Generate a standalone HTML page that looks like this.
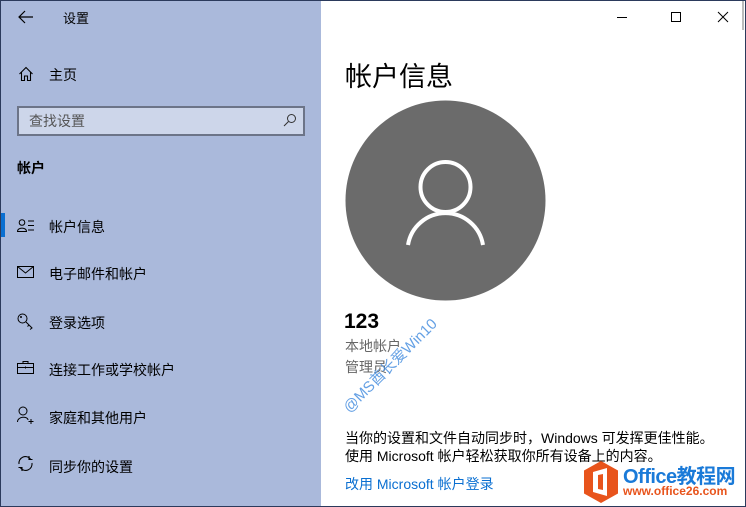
<!DOCTYPE html>
<html><head><meta charset="utf-8"><style>
*{margin:0;padding:0;box-sizing:border-box}
body{width:746px;height:507px;overflow:hidden;font-family:"Liberation Sans","Noto Sans CJK SC",sans-serif;background:#fff;position:relative}
.side{position:absolute;left:0;top:0;width:321px;height:507px;background:#aab9db}
.frame{position:absolute;left:0;top:0;width:746px;height:507px;border:1px solid #2b3a5c;pointer-events:none}
.t{position:absolute;font-size:14px;color:#000;white-space:nowrap}
.ic{position:absolute}
.search{position:absolute;left:17px;top:106px;width:288px;height:30px;border:2px solid #6c7488;background:#cdd6ea}
</style></head><body>
<div class="side"></div>
<svg class="ic" style="left:18px;top:10px" width="16" height="14"><path d="M7 1L1 7L7 13M1 7H15" stroke="#000" fill="none" stroke-width="1.2"/></svg>
<div class="t" style="left:63px;top:8px;font-size:13px">设置</div>
<svg class="ic" style="left:18px;top:66px" width="16" height="16"><path d="M1.5 8L8 1.5L14.5 8M3.5 6V14.5H6.5V10H9.5V14.5H12.5V6" stroke="#000" fill="none" stroke-width="1.1"/></svg>
<div class="t" style="left:49px;top:65px">主页</div>
<div class="search"></div>
<div class="t" style="left:29px;top:111px;color:#555">查找设置</div>
<svg class="ic" style="left:283px;top:113px" width="14" height="14"><circle cx="8.5" cy="5.5" r="4" stroke="#333" fill="none" stroke-width="1"/><path d="M5.5 8.5L1 13" stroke="#333" stroke-width="1.1"/></svg>
<div class="t" style="left:17px;top:158px;font-weight:bold">帐户</div>
<div style="position:absolute;left:0;top:213px;width:5px;height:24px;background:#0a6fd1"></div>
<svg class="ic" style="left:17px;top:219px" width="18" height="13"><circle cx="5" cy="3.5" r="2.8" stroke="#000" fill="none"/><path d="M0.5 12.5C0.5 8 9.5 8 9.5 12.5Z" stroke="#000" fill="none"/><path d="M11 2H17M11 6.5H17M11 11H17" stroke="#000"/></svg>
<div class="t" style="left:49px;top:217px">帐户信息</div>
<svg class="ic" style="left:17px;top:266px" width="17" height="12"><rect x="0.5" y="0.5" width="16" height="11" stroke="#000" fill="none"/><path d="M0.5 0.5L8.5 7L16.5 0.5" stroke="#000" fill="none"/></svg>
<div class="t" style="left:49px;top:264px">电子邮件和帐户</div>
<svg class="ic" style="left:17px;top:313px" width="17" height="17"><circle cx="5.5" cy="5.5" r="4.5" stroke="#000" fill="none"/><circle cx="4" cy="4" r="1" fill="#000"/><path d="M9 9L15 15L13 16.5M12 12L10.5 13.5" stroke="#000" fill="none"/></svg>
<div class="t" style="left:49px;top:313px">登录选项</div>
<svg class="ic" style="left:17px;top:361px" width="17" height="13"><rect x="0.5" y="2.5" width="16" height="10" stroke="#000" fill="none"/><path d="M6 2.5V0.5H11V2.5M0.5 6.5H16.5M8.5 5.5V7.5" stroke="#000" fill="none"/></svg>
<div class="t" style="left:49px;top:360px">连接工作或学校帐户</div>
<svg class="ic" style="left:17px;top:406px" width="18" height="18"><circle cx="6" cy="5" r="4" stroke="#000" fill="none"/><path d="M0.5 16C0.5 10 11 10 11 14" stroke="#000" fill="none"/><path d="M14 13V18M11.5 15.5H16.5" stroke="#000"/></svg>
<div class="t" style="left:49px;top:408px">家庭和其他用户</div>
<svg class="ic" style="left:17px;top:455px" width="17" height="17"><path d="M2 9A6.5 6.5 0 0 1 13.5 4M15 8A6.5 6.5 0 0 1 3.5 13M12 1V4.5H15.5M5 16V12.5H1.5" stroke="#000" fill="none" stroke-width="1.1"/></svg>
<div class="t" style="left:49px;top:457px">同步你的设置</div>

<svg class="ic" style="left:616px;top:10px" width="120" height="14"><path d="M1 7.5H11" stroke="#000"/><rect x="55.5" y="2.5" width="9" height="9" stroke="#000" fill="none"/><path d="M102 2L112 12M112 2L102 12" stroke="#000"/></svg>

<div class="t" style="left:345px;top:55px;font-size:27px">帐户信息</div>
<svg class="ic" style="left:345px;top:100px" width="201" height="201"><circle cx="100.5" cy="100.5" r="100" fill="#6b6b6b"/><circle cx="100.5" cy="87" r="25" stroke="#fff" stroke-width="4" fill="none"/><path d="M63 145A38 38 0 0 1 138 145" stroke="#fff" stroke-width="4" fill="none"/></svg>
<div class="t" style="left:344px;top:310px;font-size:21px;font-weight:bold">123</div>
<div class="t" style="left:345px;top:336px;color:#666">本地帐户</div>
<div class="t" style="left:345px;top:357px;color:#666">管理员</div>
<div class="t" style="left:338px;top:402px;color:#4a90e0;font-size:15px;transform:rotate(-45deg);transform-origin:left top;opacity:.85">@MS酋长爱Win10</div>
<div class="t" style="left:345px;top:428px">当你的设置和文件自动同步时，Windows 可发挥更佳性能。</div>
<div class="t" style="left:345px;top:446px">使用 Microsoft 帐户轻松获取你所有设备上的内容。</div>
<div class="t" style="left:345px;top:474px;color:#0a6fd1">改用 Microsoft 帐户登录</div>
<svg class="ic" style="left:582px;top:460px" width="38" height="44"><path d="M19 1L36 10.5V33.5L19 43L2 33.5V10.5Z" fill="#e8541c"/><path d="M11 12L25 8V36L11 32Z M16 15V29L21 30V14Z" fill="#fff" fill-rule="evenodd"/></svg>
<div class="t" style="left:623px;top:460px;font-size:20px;font-weight:bold;color:#1a7ad8;letter-spacing:-0.5px">Office教程网</div>
<div class="t" style="left:623px;top:484px;font-size:12px;font-weight:bold;color:#e8541c">www.office26.com</div>
<div style="position:absolute;left:742px;top:0;width:2px;height:30px;background:#bbb"></div>
<div class="frame"></div>
</body></html>
